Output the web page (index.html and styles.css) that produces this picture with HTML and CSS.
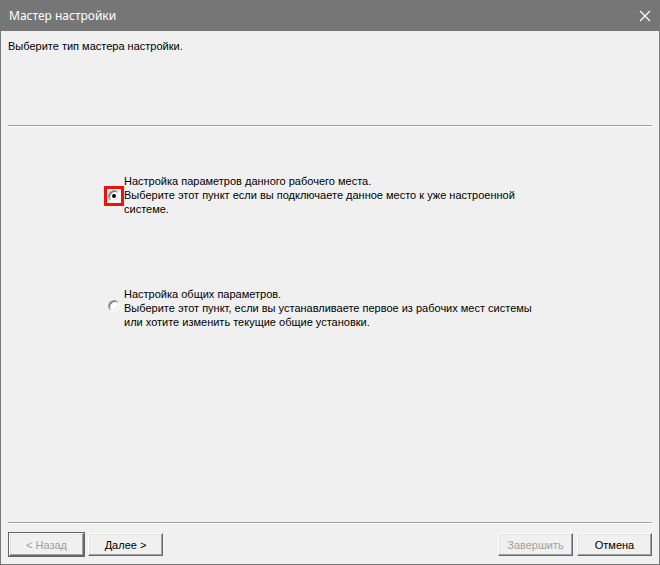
FILE: index.html
```html
<html lang="ru">
<head>
    <meta charset="UTF-8">
    <title>Мастер настройки</title>
    <link rel="stylesheet" href="styles.css">
</head>
<body>
    <div class="window">
        <div class="titlebar">
            <span class="title">Мастер настройки</span>
            <svg class="close" width="12" height="12" viewBox="0 0 12 12">
                <path d="M1 1 L11 11 M11 1 L1 11" stroke="#ffffff" stroke-width="1.2" fill="none"/>
            </svg>
        </div>
        <div class="content">
            <div class="intro">Выберите тип мастера настройки.</div>
            <div class="sep"></div>
            <div class="options">
                <div class="option">
                    <span class="focus"><span class="radio checked"></span></span>
                    <div class="label">
                        Настройка параметров данного рабочего места.<br>
                        Выберите этот пункт если вы подключаете данное место к уже настроенной<br>
                        системе.
                    </div>
                </div>
                <div class="option second">
                    <span class="focus plain"><span class="radio"></span></span>
                    <div class="label">
                        Настройка общих параметров.<br>
                        Выберите этот пункт, если вы устанавливаете первое из рабочих мест системы<br>
                        или хотите изменить текущие общие установки.
                    </div>
                </div>
            </div>
            <div class="sep"></div>
            <div class="buttons">
                <button class="btn default" disabled>&lt; Назад</button>
                <button class="btn">Далее &gt;</button>
                <span class="spacer"></span>
                <button class="btn" disabled>Завершить</button>
                <button class="btn">Отмена</button>
            </div>
        </div>
    </div>
</body>
</html>
```

FILE: styles.css
```css
body {
    margin: 0;
    padding: 0;
    background-color: #f0f0f0;
    font-family: "Liberation Sans", Arial, sans-serif;
    font-size: 11px;
    color: #000000;
}

.window {
    width: 660px;
    height: 565px;
    box-sizing: border-box;
    border: 1px solid #7a7a7a;
    border-top: none;
    display: flex;
    flex-direction: column;
    background-color: #f0f0f0;
}

.titlebar {
    height: 31px;
    margin: 0 -1px;
    background-color: #767676;
    display: flex;
    align-items: center;
    justify-content: space-between;
    padding: 0 9px 0 9px;
}

.title {
    font-family: "Noto Sans", "Open Sans", sans-serif;
    font-size: 12px;
    color: #ffffff;
    margin-top: -1px;
}

.close {
    margin-right: 0;
}

.content {
    flex: 1;
    display: flex;
    flex-direction: column;
    padding: 0 7px;
}

.intro {
    height: 85px;
    padding-top: 9px;
}

.sep {
    height: 1px;
    border-top: 1px solid #a0a0a0;
    background-color: #ffffff;
}

.options {
    flex: 1;
    padding: 47px 0 0 96px;
}

.option {
    display: flex;
    align-items: center;
}

.option.second {
    margin-top: 71px;
}

.label {
    line-height: 14px;
    margin-left: 0;
}

.focus {
    width: 14px;
    height: 14px;
    border: 3px solid #ee1111;
    display: flex;
    align-items: center;
    justify-content: center;
    margin-top: 2px;
}

.focus.plain {
    border-color: transparent;
    margin-top: -4px;
}

.radio {
    width: 10px;
    height: 10px;
    border-radius: 50%;
    border: 1px solid;
    border-color: #a0a0a0 #ffffff #ffffff #a0a0a0;
    background-color: #ffffff;
    box-shadow: inset 1px 1px 0 #696969, inset -1px -1px 0 #e3e3e3;
    position: relative;
}

.radio.checked::after {
    content: "";
    position: absolute;
    left: 3px;
    top: 3px;
    width: 4px;
    height: 4px;
    border-radius: 50%;
    background-color: #000000;
}

.buttons {
    display: flex;
    gap: 4px;
    padding: 9px 0 8px 1px;
}

.spacer {
    flex: 1;
}

.btn {
    width: 75px;
    height: 23px;
    font-family: "Liberation Sans", Arial, sans-serif;
    font-size: 11px;
    color: #000000;
    background-color: #f0f0f0;
    border: 1px solid;
    border-color: #ffffff #696969 #696969 #ffffff;
    box-shadow: inset -1px -1px 0 #a0a0a0, inset 1px 1px 0 #e3e3e3;
    padding: 0;
}

.btn:disabled {
    color: #a0a0a0;
}

.btn.default {
    outline: 1px solid #646464;
    outline-offset: 0;
}
```
